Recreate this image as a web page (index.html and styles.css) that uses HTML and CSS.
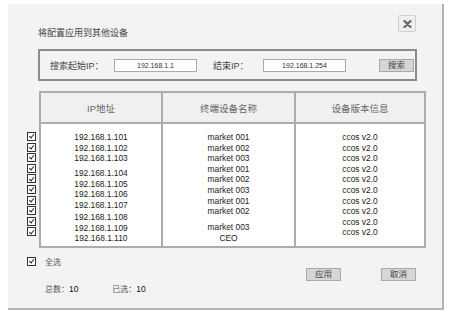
FILE: index.html
```html
<!DOCTYPE html>
<html lang="zh-CN">

<head>
  <meta charset="UTF-8">
  <title>将配置应用到其他设备</title>
  <link rel="stylesheet" href="styles.css">
</head>

<body>

  <div class="dialog">
    <div class="dialog-head">
      <div class="title">将配置应用到其他设备</div>
      <button class="close">
        <svg width="9" height="8" viewBox="0 0 9 8"><path d="M1.5 1L7.5 7M7.5 1L1.5 7" stroke="#666" stroke-width="2.2" stroke-linecap="round"/></svg>
      </button>
    </div>

    <div class="search">
      <span class="label label-start">搜索起始IP：</span>
      <input class="ip" type="text" value="192.168.1.1">
      <span class="label label-end">结束IP：</span>
      <input class="ip" type="text" value="192.168.1.254">
      <button class="btn btn-search">搜索</button>
    </div>

    <div class="list">
      <div class="checks">
        <span class="cb"></span><span class="cb"></span><span class="cb"></span><span class="cb"></span><span class="cb"></span>
        <span class="cb"></span><span class="cb"></span><span class="cb"></span><span class="cb"></span><span class="cb"></span>
      </div>
      <table class="devices">
        <colgroup>
          <col class="c-ip">
          <col class="c-name">
          <col class="c-ver">
        </colgroup>
        <thead>
          <tr>
            <th>IP地址</th>
            <th>终端设备名称</th>
            <th>设备版本信息</th>
          </tr>
        </thead>
        <tbody>
          <tr>
            <td>
              <div>192.168.1.101</div>
              <div>192.168.1.102</div>
              <div>192.168.1.103</div>
              <div class="gap-a">192.168.1.104</div>
              <div>192.168.1.105</div>
              <div>192.168.1.106</div>
              <div>192.168.1.107</div>
              <div class="gap-b">192.168.1.108</div>
              <div>192.168.1.109</div>
              <div>192.168.1.110</div>
            </td>
            <td>
              <div>market 001</div>
              <div>market 002</div>
              <div>market 003</div>
              <div>market 001</div>
              <div>market 002</div>
              <div>market 003</div>
              <div>market 001</div>
              <div>market 002</div>
              <div class="gap-c">market 003</div>
              <div>CEO</div>
            </td>
            <td>
              <div>ccos v2.0</div>
              <div>ccos v2.0</div>
              <div>ccos v2.0</div>
              <div>ccos v2.0</div>
              <div>ccos v2.0</div>
              <div>ccos v2.0</div>
              <div>ccos v2.0</div>
              <div>ccos v2.0</div>
              <div>ccos v2.0</div>
              <div>ccos v2.0</div>
            </td>
          </tr>
        </tbody>
      </table>
    </div>

    <div class="foot">
      <div class="summary">
        <div class="all"><span class="cb"></span><span>全选</span></div>
        <div class="count">
          <span class="total">总数：<span class="num">10</span></span>
          <span>已选：<span class="num">10</span></span>
        </div>
      </div>
      <div class="actions">
        <button class="btn">应用</button>
        <button class="btn">取消</button>
      </div>
    </div>
  </div>

</body>

</html>
```

FILE: styles.css
```css
body {
  margin: 0;
  background: #fff;
  font-family: "Liberation Sans", "Noto Sans CJK SC", sans-serif;
  color: #333;
}

.dialog {
  margin: 4px 0 0 8px;
  width: 436px;
  height: 306px;
  box-sizing: border-box;
  padding: 10px 26px 0 30px;
  background: #f3f3f3;
  border-right: 2px solid #b4b4b4;
  border-bottom: 2px solid #b4b4b4;
}

.dialog-head {
  display: flex;
  justify-content: space-between;
  align-items: flex-start;
  height: 25px;
}

.title {
  margin-top: 13px;
  font-size: 9px;
  line-height: 12px;
  color: #444;
}

.close {
  margin-top: 1px;
  width: 18px;
  height: 17px;
  padding: 0;
  display: flex;
  align-items: center;
  justify-content: center;
  background: #efefef;
  border: 1px solid #cfcfcf;
  border-radius: 2px;
}

.search {
  margin-top: 10px;
  width: 379px;
  height: 32px;
  box-sizing: border-box;
  border: 2px solid #8c8c8c;
  display: flex;
  align-items: center;
  padding: 0 1px 0 10px;
}

.label {
  font-size: 9px;
  color: #444;
}

.label-start {
  width: 64px;
}

.label-end {
  margin-left: 16px;
  width: 50px;
}

.ip {
  width: 83px;
  height: 13px;
  box-sizing: border-box;
  border: 1px solid #aaa;
  padding: 0;
  background: #fff;
  font-family: "Liberation Sans", sans-serif;
  font-size: 7px;
  text-align: center;
  color: #333;
}

.btn {
  width: 35px;
  height: 13px;
  padding: 0;
  background: #d6d6d6;
  border: 1px solid #a8a8a8;
  font-family: "Liberation Sans", "Noto Sans CJK SC", sans-serif;
  font-size: 8.5px;
  line-height: 11px;
  color: #444;
}

.btn-search {
  margin-left: auto;
}

.list {
  display: flex;
  margin: 10px 0 0 -11px;
}

.checks {
  flex: none;
  width: 12px;
  padding-top: 41px;
}

.cb {
  display: block;
  position: relative;
  width: 9px;
  height: 9px;
  box-sizing: border-box;
  border: 1px solid #333;
  background: #fff;
  margin-bottom: 1.6px;
}

.cb::after {
  content: "";
  position: absolute;
  left: 2.2px;
  top: 0.3px;
  width: 2px;
  height: 4.3px;
  border-right: 1.5px solid #222;
  border-bottom: 1.5px solid #222;
  transform: rotate(40deg);
}

.devices {
  flex: none;
  width: 385px;
  table-layout: fixed;
  border-collapse: collapse;
  border: 2px solid #acacac;
}

.c-ip {
  width: 122px;
}

.c-name {
  width: 133px;
}

.c-ver {
  width: 130px;
}

.devices th,
.devices td {
  border: 2px solid #acacac;
  text-align: center;
  padding: 0;
}

.devices th {
  height: 29px;
  background: #f0f0f0;
  font-weight: normal;
  font-size: 9.5px;
  color: #666;
}

.devices td {
  height: 124px;
  vertical-align: top;
  background: #fff;
  padding-top: 8px;
  box-sizing: border-box;
  font-size: 8.4px;
  line-height: 10.6px;
  color: #222;
}

.gap-a {
  margin-top: 4.5px;
}

.gap-b {
  margin-top: 1.3px;
}

.gap-c {
  margin-top: 5.4px;
}

.foot {
  display: flex;
  justify-content: space-between;
}

.summary {
  margin-left: -11px;
  font-size: 8px;
  color: #555;
}

.num {
  font-size: 8.5px;
  color: #111;
}

.all {
  display: flex;
  align-items: center;
  margin-top: 8px;
  height: 10px;
}

.all .cb {
  margin: 0 9px 0 0;
}

.count {
  margin-top: 18px;
  padding-left: 18px;
  line-height: 10px;
}

.total {
  display: inline-block;
  width: 65px;
}

.actions {
  display: flex;
  gap: 40px;
  margin-top: 20px;
  height: 13px;
}
```
